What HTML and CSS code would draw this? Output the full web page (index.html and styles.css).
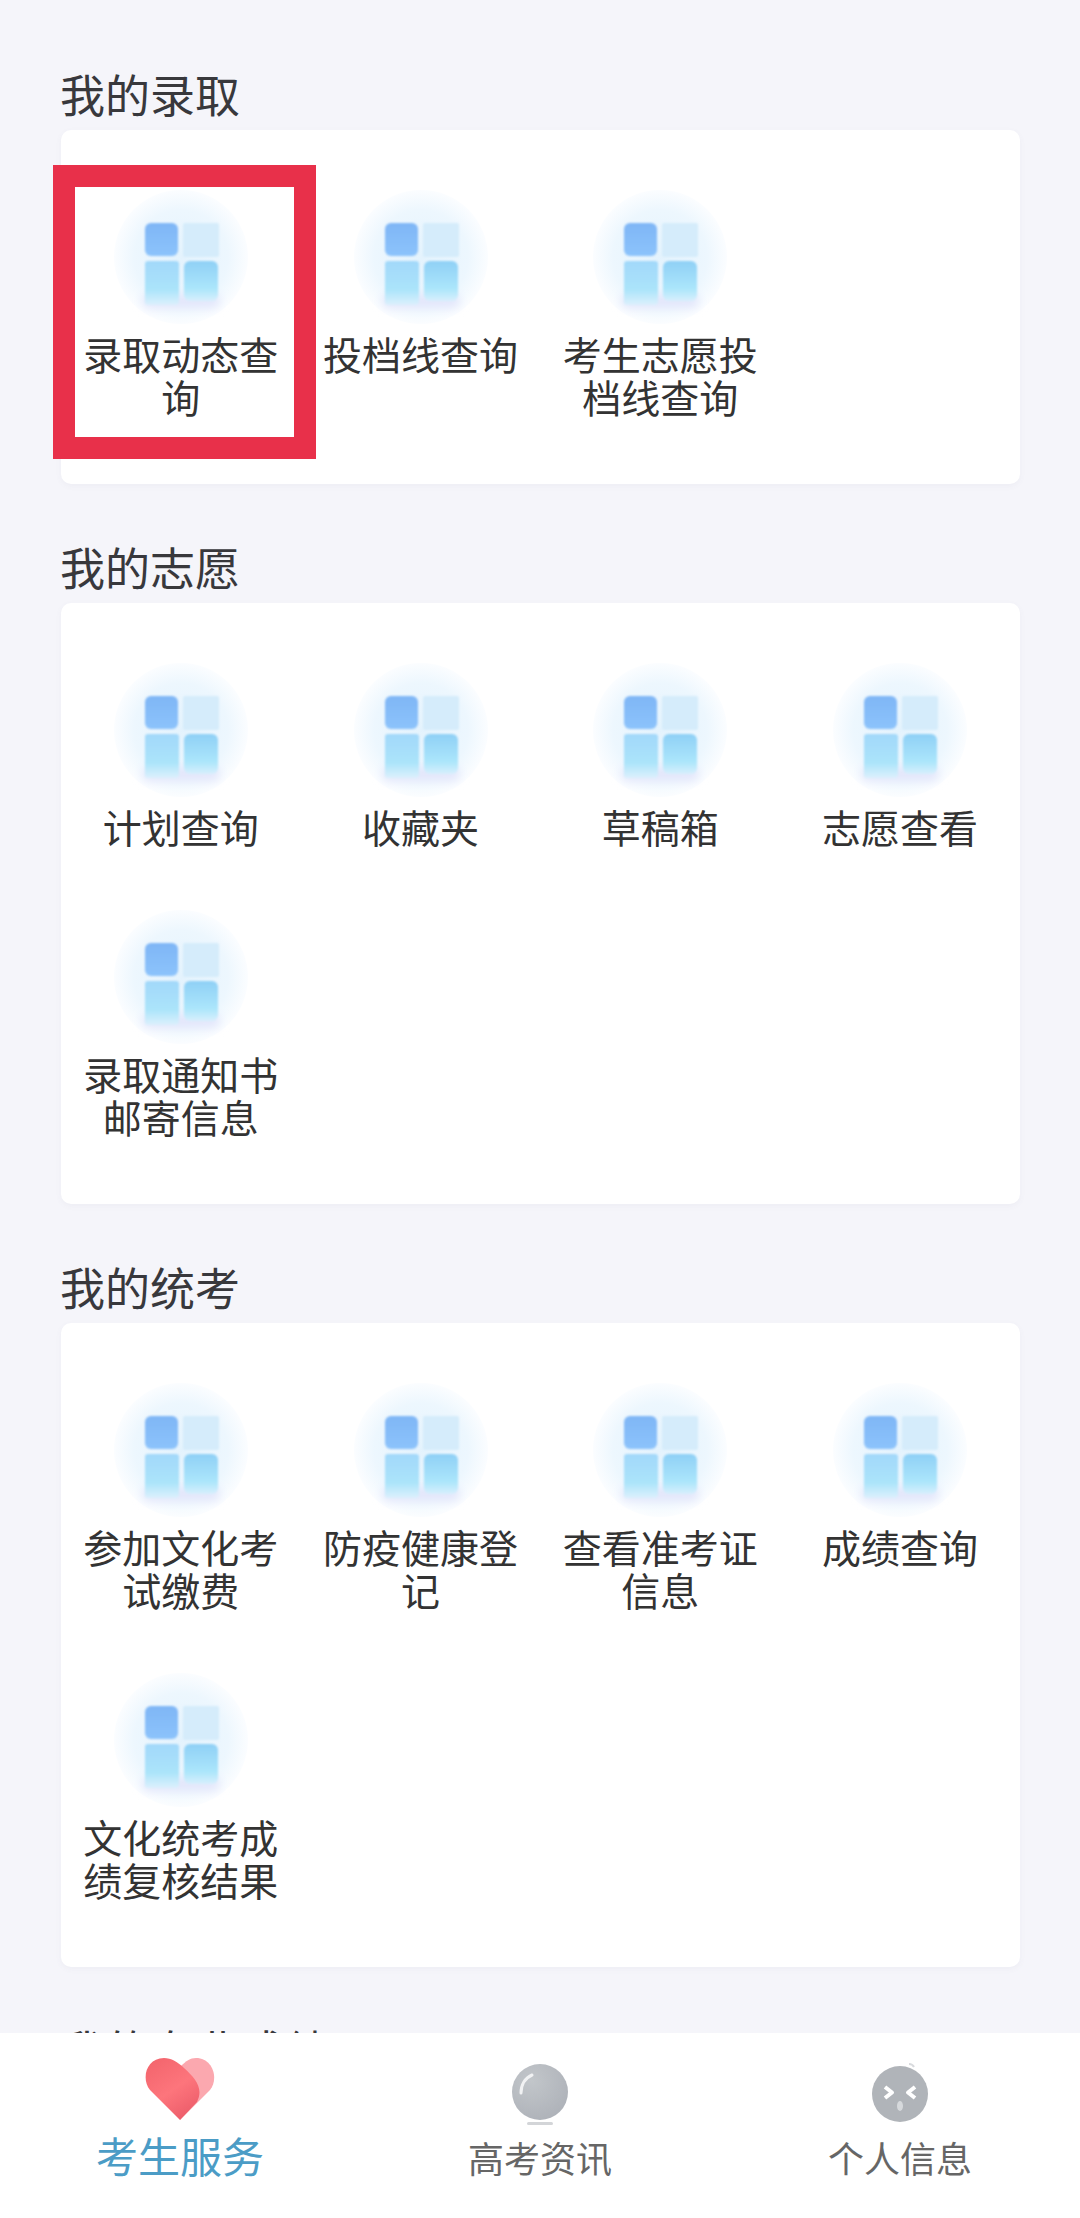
FILE: index.html
```html
<!DOCTYPE html>
<html lang="zh-CN">
<head>
  <meta charset="UTF-8">
  <meta name="viewport" content="width=device-width, initial-scale=1.0">
  <title>考生服务</title>
  <link rel="stylesheet" href="styles.css">
</head>
<body>
  <!-- shared icon, every grid item points at it with <use> -->
  <svg class="defs" width="0" height="0" aria-hidden="true">
    <defs>
      <radialGradient id="discFill">
        <stop offset="0" stop-color="#e4f3fd"/>
        <stop offset="0.7" stop-color="#edf7fe"/>
        <stop offset="1" stop-color="#fbfdff"/>
      </radialGradient>
      <linearGradient id="tileBlue" x1="0" y1="0" x2="0" y2="1">
        <stop offset="0" stop-color="#7fb6f6"/>
        <stop offset="1" stop-color="#8cc3fb"/>
      </linearGradient>
      <linearGradient id="tileLeft" x1="0" y1="0" x2="0" y2="1">
        <stop offset="0" stop-color="#a2d8fa"/>
        <stop offset="0.65" stop-color="#abe4fa"/>
        <stop offset="1" stop-color="#dcf0fd"/>
      </linearGradient>
      <linearGradient id="tileRight" x1="0" y1="0" x2="0" y2="1">
        <stop offset="0" stop-color="#8fd0f6"/>
        <stop offset="0.7" stop-color="#ace6fb"/>
        <stop offset="1" stop-color="#d8effd"/>
      </linearGradient>
      <filter id="soft" x="-10%" y="-10%" width="120%" height="120%">
        <feGaussianBlur stdDeviation="1.1"/>
      </filter>
      <filter id="softer" x="-30%" y="-60%" width="160%" height="220%">
        <feGaussianBlur stdDeviation="5"/>
      </filter>
      <symbol id="gridIcon" viewBox="0 0 134 134">
        <circle cx="67" cy="67" r="67" fill="url(#discFill)"/>
        <rect x="28" y="104" width="78" height="14" rx="7" fill="#e3e6fb" filter="url(#softer)"/>
        <g filter="url(#soft)">
          <rect x="69" y="33" width="36" height="34" rx="2" fill="#d5ecfb"/>
          <rect x="31" y="71" width="34" height="44" rx="3" fill="url(#tileLeft)"/>
          <rect x="70" y="71" width="34" height="40" rx="6" fill="url(#tileRight)"/>
          <rect x="31" y="33" width="33" height="33" rx="6" fill="url(#tileBlue)"/>
        </g>
      </symbol>
    </defs>
  </svg>

  <div class="page">
    <h2 class="section-title">我的录取</h2>
    <div class="card">
      <div class="item">
        <svg class="item-icon"><use href="#gridIcon"/></svg>
        <span class="item-label">录取动态查询</span>
        <div class="marker"></div>
      </div>
      <div class="item">
        <svg class="item-icon"><use href="#gridIcon"/></svg>
        <span class="item-label">投档线查询</span>
      </div>
      <div class="item">
        <svg class="item-icon"><use href="#gridIcon"/></svg>
        <span class="item-label">考生志愿投档线查询</span>
      </div>
    </div>

    <h2 class="section-title">我的志愿</h2>
    <div class="card">
      <div class="item">
        <svg class="item-icon"><use href="#gridIcon"/></svg>
        <span class="item-label">计划查询</span>
      </div>
      <div class="item">
        <svg class="item-icon"><use href="#gridIcon"/></svg>
        <span class="item-label">收藏夹</span>
      </div>
      <div class="item">
        <svg class="item-icon"><use href="#gridIcon"/></svg>
        <span class="item-label">草稿箱</span>
      </div>
      <div class="item">
        <svg class="item-icon"><use href="#gridIcon"/></svg>
        <span class="item-label">志愿查看</span>
      </div>
      <div class="item">
        <svg class="item-icon"><use href="#gridIcon"/></svg>
        <span class="item-label">录取通知书邮寄信息</span>
      </div>
    </div>

    <h2 class="section-title">我的统考</h2>
    <div class="card">
      <div class="item">
        <svg class="item-icon"><use href="#gridIcon"/></svg>
        <span class="item-label">参加文化考试缴费</span>
      </div>
      <div class="item">
        <svg class="item-icon"><use href="#gridIcon"/></svg>
        <span class="item-label">防疫健康登记</span>
      </div>
      <div class="item">
        <svg class="item-icon"><use href="#gridIcon"/></svg>
        <span class="item-label">查看准考证信息</span>
      </div>
      <div class="item">
        <svg class="item-icon"><use href="#gridIcon"/></svg>
        <span class="item-label">成绩查询</span>
      </div>
      <div class="item">
        <svg class="item-icon"><use href="#gridIcon"/></svg>
        <span class="item-label">文化统考成绩复核结果</span>
      </div>
    </div>

    <h2 class="section-title section-under-tabs">我的专业成绩</h2>
  </div>

  <nav class="tabbar">
    <div class="tab tab-active">
      <svg class="tab-icon heart" viewBox="0 0 70 64">
        <defs>
          <linearGradient id="heartFront" x1="0" y1="0" x2="0.6" y2="1">
            <stop offset="0" stop-color="#f2636b"/>
            <stop offset="0.6" stop-color="#fd757c"/>
            <stop offset="1" stop-color="#ee5f6c"/>
          </linearGradient>
        </defs>
        <path d="M35 63 L65 33 C74 22 68 1 51 1 C45 1 41 4 36 9 L30 40 Z" fill="#fba8af"/>
        <path d="M35 63 L5 33 C-4 22 1 1 19 1 C26 1 33 5 39 11 C50 21 59 31 52 45 Z" fill="url(#heartFront)"/>
      </svg>
      <span class="tab-label">考生服务</span>
    </div>
    <div class="tab">
      <svg class="tab-icon" viewBox="0 0 56 66">
        <defs>
          <radialGradient id="globeFill" cx="0.35" cy="0.3" r="0.8">
            <stop offset="0" stop-color="#c2c6ca"/>
            <stop offset="1" stop-color="#adb1b8"/>
          </radialGradient>
        </defs>
        <circle cx="28" cy="31" r="28" fill="url(#globeFill)"/>
        <path d="M9 32 C9 24 13 17 20 14" fill="none" stroke="#f1f2f3" stroke-width="3" stroke-linecap="round"/>
        <rect x="15" y="61" width="26" height="3" rx="1.5" fill="#d3d5d8"/>
      </svg>
      <span class="tab-label">高考资讯</span>
    </div>
    <div class="tab">
      <svg class="tab-icon" viewBox="0 0 56 66">
        <circle cx="28" cy="33" r="28" fill="#b0b4b9"/>
        <path d="M13 26 L20 31.5 L13 37" fill="none" stroke="#fff" stroke-width="4" stroke-linejoin="round"/>
        <path d="M43 26 L36 31.5 L43 37" fill="none" stroke="#fff" stroke-width="4" stroke-linejoin="round"/>
        <ellipse cx="28" cy="45" rx="3" ry="5" fill="#d6d9dc"/>
        <path d="M37 3 C39 3 41 4 42 6" fill="none" stroke="#d8dadd" stroke-width="2"/>
      </svg>
      <span class="tab-label">个人信息</span>
    </div>
  </nav>
</body>
</html>
```

FILE: styles.css
```css
html, body {
  margin: 0;
  height: 100%;
  overflow: hidden;
}

body {
  background: #f5f5fa;
  color: #333;
  font-family: "Noto Sans CJK SC", "Noto Sans", sans-serif;
}

.defs {
  position: absolute;
}

.page {
  padding: 62px 60px 0 60px;
}

.section-title {
  margin: 0 0 4px;
  font-size: 45px;
  font-weight: 400;
  line-height: 64px;
  color: #38383c;
}

/* only the tops of this title show above the tab bar */
.section-under-tabs {
  margin-top: 3px;
}

.card {
  display: grid;
  grid-template-columns: repeat(4, 1fr);
  row-gap: 62px;
  padding: 60px 0 66px;
  margin: 0 0 51px 1px;
  background: #fff;
  border-radius: 10px;
  box-shadow: 0 2px 6px rgba(90, 100, 140, 0.05);
}

.item {
  position: relative;
  display: flex;
  flex-direction: column;
  align-items: center;
}

.item-icon {
  width: 134px;
  height: 134px;
  margin-bottom: 8px;
}

.item-label {
  width: 200px;
  font-size: 39px;
  line-height: 43px;
  text-align: center;
}

/* red box drawn over the first entry */
.marker {
  position: absolute;
  left: -8px;
  top: -25px;
  width: 219px;
  height: 250px;
  border: 22px solid #e8304a;
}

.tabbar {
  position: fixed;
  left: 0;
  right: 0;
  bottom: 0;
  height: 185px;
  display: grid;
  grid-template-columns: 360px 360px 360px;
  background: #fff;
}

.tab {
  display: flex;
  flex-direction: column;
  align-items: center;
  padding-top: 28px;
}

.tab-icon {
  width: 56px;
  height: 66px;
  margin-bottom: 8px;
}

.tab-label {
  font-size: 36px;
  line-height: 44px;
  color: #666;
}

.heart {
  width: 70px;
  height: 64px;
  margin-top: -4px;
  margin-bottom: 10px;
}

.tab-active .tab-label {
  font-size: 42px;
  line-height: 48px;
  color: #4b9cc6;
}
```
